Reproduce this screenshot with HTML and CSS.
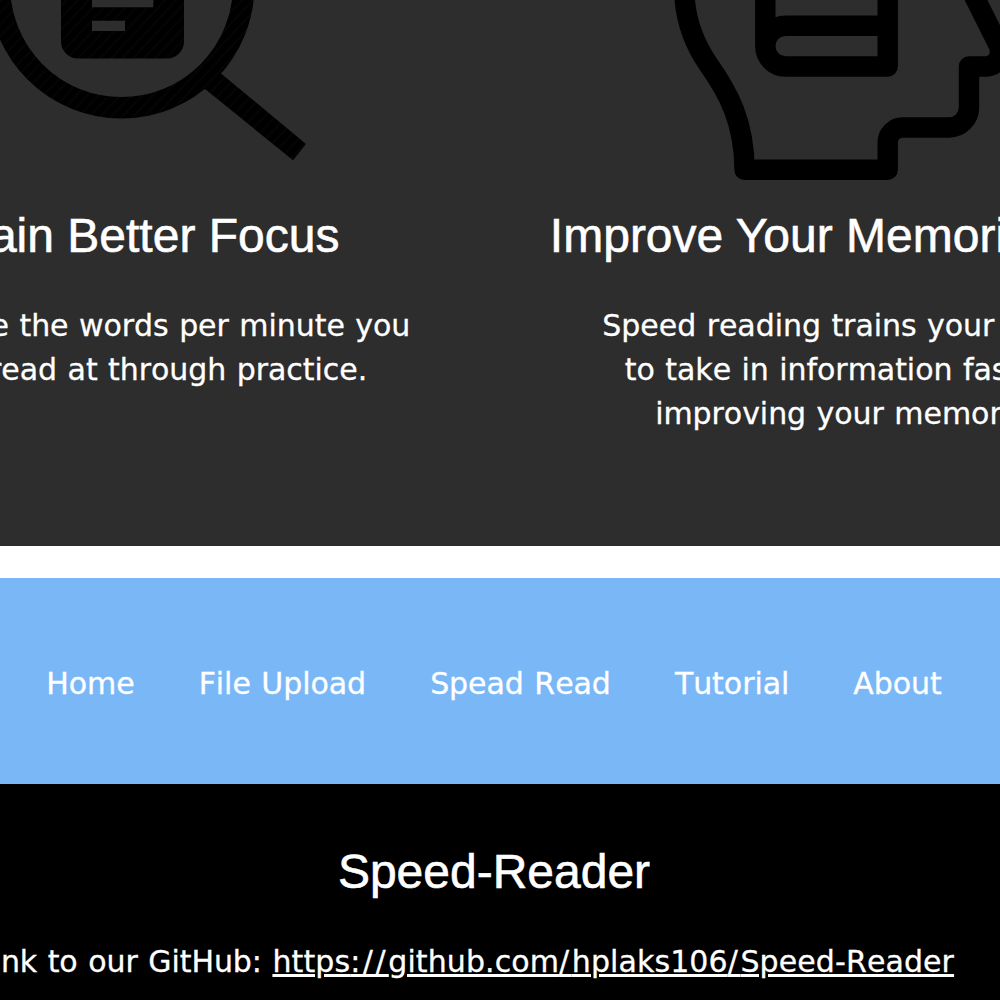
FILE: index.html
```
<!DOCTYPE html>
<html lang="en">
<head>
<meta charset="utf-8">
<title>Speed-Reader</title>
<link rel="stylesheet" href="styles.css">
</head>
<body>
<div class="page">
  <section class="features">
    <article class="feature">
      <svg class="feature-icon" viewBox="-202 0 696 180" aria-hidden="true">
        <defs>
          <pattern id="hatch" width="8" height="8" patternUnits="userSpaceOnUse" patternTransform="rotate(43)">
            <rect width="8" height="8" fill="#000"/>
            <rect width="2" height="8" fill="#050505"/>
          </pattern>
        </defs>
        <circle cx="121.500" cy="-14.400" r="122.200" fill="none" stroke="url(#hatch)" stroke-width="21.500"/>
        <path fill="url(#hatch)" fill-rule="evenodd" d="M61-40H184V41.500a17 17 0 0 1-17 17H78a17 17 0 0 1-17-17ZM92-10V7.300H153.300V-10ZM92 20.700V31H125V20.700Z"/>
        <path fill="url(#hatch)" d="M212 66 306 144 293 160.300 200 85Z"/>
      </svg>
      <h3>Gain Better Focus</h3>
      <p>Increase the words per minute you<br>can read at through practice.</p>
    </article>
    <article class="feature">
      <svg class="feature-icon" viewBox="494 0 696 180" aria-hidden="true">
        <g fill="none" stroke="#000" stroke-width="20.400" stroke-linejoin="round">
          <path d="M684.300-8C685 19 693 42 708.500 64.500C728 92 744.500 122 744.500 169.700H887.700V142.500A15 15 0 0 1 902.700 127.500H949A20 20 0 0 0 969 107.500V66.500H985.500C996 66.500 1003 56 998.500 45L972-8"/>
          <path d="M765.300-8V46A20.300 20.300 0 0 0 785.600 66.500H887.700V-8M887.700 25.700H785.600A20.300 20.300 0 0 0 765.300 46"/>
        </g>
      </svg>
      <h3>Improve Your Memorization</h3>
      <p>Speed reading trains your brain<br>to take in information faster,<br>improving your memory.</p>
    </article>
  </section>
  <nav class="nav">
    <a href="#">Home</a>
    <a href="#">File Upload</a>
    <a href="#">Spead Read</a>
    <a href="#">Tutorial</a>
    <a href="#">About</a>
  </nav>
  <footer class="footer">
    <h3>Speed-Reader</h3>
    <p>Link to our GitHub: <a href="#">https<span class="wide">://</span>github.com<span class="wide">/</span>hplaks106<span class="wide">/</span>Speed-Reader</a></p>
  </footer>
</div>
</body>
</html>
```
FILE: styles.css
```
html, body {
  margin: 0;
  height: 1000px;
  overflow: hidden;
}
body {
  background: #fff;
  color: #fff;
  font: 30px/44px Verdana, "DejaVu Sans", sans-serif;
  font-kerning: none;
  letter-spacing: -0.05px;
  word-spacing: 1px;
  -webkit-text-stroke: 0.3px #fff;
}
.page {
  width: 1392px;
  margin-left: -202px;
}
h3 {
  margin: 0;
  font: 400 48px/72px "Liberation Sans", Arial, sans-serif;
  font-kerning: normal;
  letter-spacing: 0;
  word-spacing: 0;
  -webkit-text-stroke: 0.6px #fff;
}
p {
  margin: 0;
  white-space: nowrap;
}
a {
  color: inherit;
}
.features {
  display: flex;
  height: 546px;
  background: #2d2d2d;
  text-align: center;
}
.feature {
  flex: 1;
}
.feature-icon {
  display: block;
  width: 100%;
  height: 180px;
}
.feature h3 {
  padding-top: 20px;
  margin-bottom: 32px;
}
.nav {
  display: flex;
  justify-content: center;
  align-items: center;
  gap: 64px;
  height: 206px;
  box-sizing: border-box;
  padding-top: 5px;
  margin-top: 32px;
  background: #7ab7f7;
}
.nav a {
  text-decoration: none;
}
.footer {
  height: 216px;
  box-sizing: border-box;
  padding-top: 52px;
  background: #000;
  text-align: center;
}
.footer h3 {
  margin-bottom: 32px;
}
.footer p {
  padding-right: 58px;
}
.footer a {
  letter-spacing: 0.1px;
}
.footer .wide {
  letter-spacing: 2.6px;
}
```
